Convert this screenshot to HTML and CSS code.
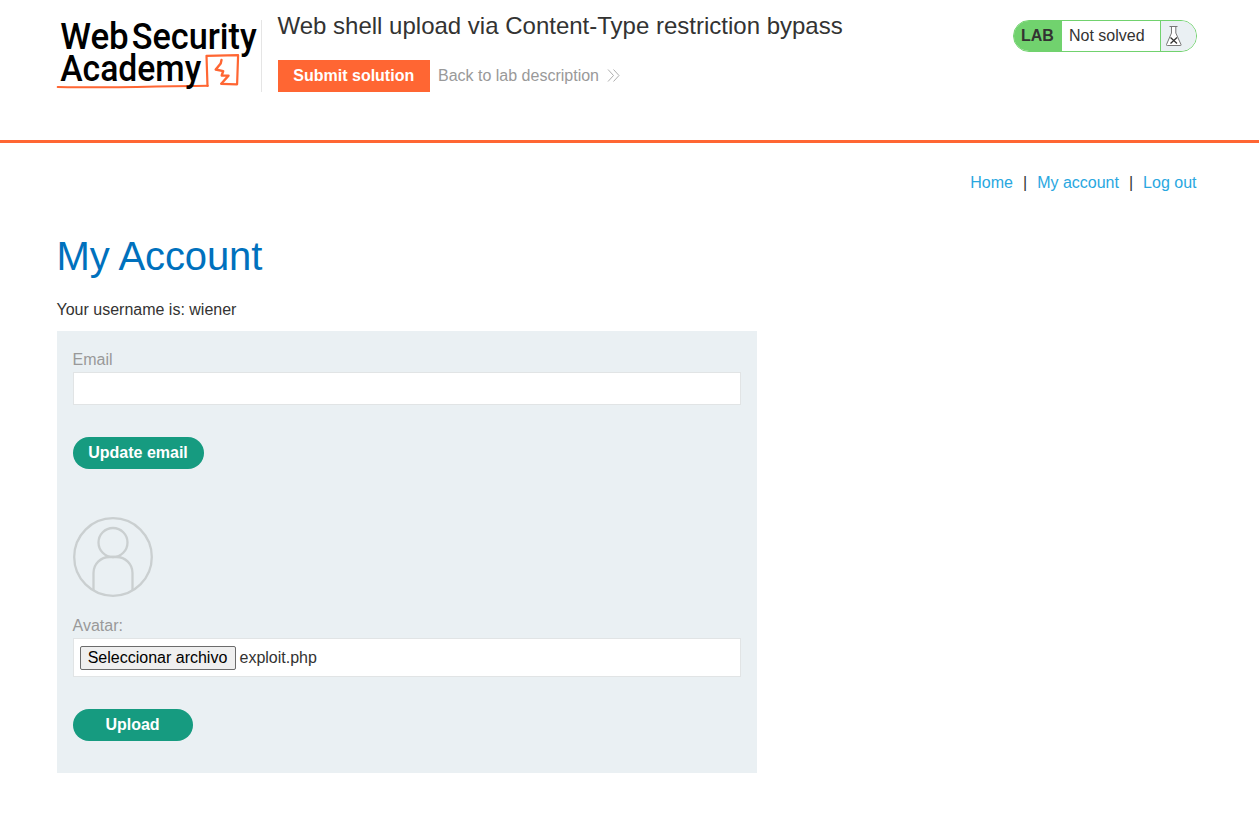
FILE: index.html
```html
<!DOCTYPE html>
<html lang="en">
<head>
<meta charset="utf-8">
<title>Web shell upload via Content-Type restriction bypass</title>
<link rel="stylesheet" href="styles.css">
</head>
<body>
<header class="lab-header">
  <svg class="logo" viewBox="57.300 20 204 72" role="img" aria-label="Web Security Academy">
    <g class="logo-mark">
      <path d="M58 87 C90 88 140 86.5 208 85.8" stroke-width="2"/>
      <path d="M207.8 86 L206.8 55.8 L238.4 55.2 L237.4 84.3 L221.5 83.9" stroke-width="2.2"/>
      <path d="M221.8 60 L221 63.4 L216 69.5 L223.5 71.2 L222 75.5 L228.8 75.6 L221.8 83.5" stroke-width="2.4"/>
    </g>
    <g class="logo-text">
      <text x="60.500" y="48.5" textLength="68.500" lengthAdjust="spacingAndGlyphs">Web</text>
      <text x="132" y="48.5" textLength="125" lengthAdjust="spacingAndGlyphs">Security</text>
      <text x="60.500" y="80.800" textLength="141" lengthAdjust="spacingAndGlyphs">Academy</text>
    </g>
  </svg>
  <div class="title-container">
    <h2 class="lab-title">Web shell upload via Content-Type restriction bypass</h2>
    <div class="lab-actions">
      <a class="submit-button">Submit solution</a>
      <a class="back-link">Back to lab description
        <svg class="chevrons" viewBox="0 0 13 13"><path d="M1 .5 L6.500 6.500 L1 12.500 M6.500 .5 L12 6.500 L6.500 12.500"/></svg>
      </a>
    </div>
  </div>
  <div class="lab-status">
    <span class="status-label">LAB</span>
    <span class="status-text">Not solved</span>
    <span class="status-icon">
      <svg class="flask" viewBox="0 0 18 22"><path class="glass" d="M4.500 1.500 H12.500 M6.500 1.500 V8 L1.500 19.500 Q1.200 20.500 2.300 20.500 H15.200 Q16.500 20.500 16 19.500 L10.800 8 V1.500"/><path class="cross" d="M5.500 12.500 L12 18.500 M12 12.500 L5.500 18.500"/></svg>
    </span>
  </div>
</header>
<main class="content">
  <nav class="top-links"><a>Home</a><span class="bar">|</span><a>My account</a><span class="bar">|</span><a>Log out</a></nav>
  <h1 class="page-title">My Account</h1>
  <p class="username">Your username is: wiener</p>
  <section class="account">
    <form>
      <label class="field-label" for="email">Email</label>
      <input class="text-input" id="email" type="email">
      <button class="button" type="button">Update email</button>
    </form>
    <form class="avatar-form">
      <svg class="avatar" viewBox="0 0 80 80"><circle cx="40" cy="40" r="38.800"/><circle cx="40" cy="25.500" r="14.500"/><path d="M20.500 73 V56 A16 16 0 0 1 36.500 40 H43.500 A16 16 0 0 1 59.500 56 V73"/></svg>
      <span class="field-label">Avatar:</span>
      <div class="file-input"><button class="file-button" type="button">Seleccionar archivo</button><span>exploit.php</span></div>
      <button class="button upload" type="button">Upload</button>
    </form>
  </section>
</main>
</body>
</html>
```
FILE: styles.css
```css
* { box-sizing: border-box; }
body {
  margin: 0;
  background: #fff;
  color: #333332;
  font: 16px/24px "Liberation Sans", Arial, sans-serif;
}
.lab-header {
  display: flex;
  align-items: flex-start;
  height: 143px;
  padding: 20px 62.500px 0 56.500px;
  border-bottom: 3px solid #ff6633;
}
.logo { width: 204px; height: 72px; flex: none; overflow: visible; }
.logo-text { font: 500 37px Roboto, sans-serif; fill: #000; }
.logo-mark { fill: none; stroke: #ff6633; stroke-linecap: round; stroke-linejoin: round; }
.title-container {
  display: flex;
  flex-direction: column;
  justify-content: space-between;
  height: 72px;
  padding-left: 16px;
  border-left: 1px solid #e5e5e5;
}
.lab-title { margin: -8px 0 0; font-size: 24px; font-weight: 400; line-height: 28px; }
.lab-actions { display: flex; align-items: center; gap: 8px; }
.submit-button {
  width: 152.500px;
  height: 32px;
  background: #ff6633;
  color: #fff;
  font-weight: 700;
  line-height: 32px;
  text-align: center;
}
.back-link { display: flex; align-items: center; gap: 8px; color: #999; line-height: 32px; }
.chevrons { width: 13px; height: 13px; margin-bottom: 2px; fill: none; stroke: #999; stroke-width: .8; }
.lab-status {
  display: flex;
  width: 184px;
  height: 32px;
  margin-left: auto;
  overflow: hidden;
  border: 1px solid #71d26e;
  border-radius: 16px;
  line-height: 30px;
}
.status-label { width: 48px; padding-left: 7.500px; background: #71d26e; font-weight: 700; }
.status-text { width: 99px; padding-left: 7.500px; border-right: 1px solid #71d26e; }
.status-icon { flex: 1; padding: 4px 0 0 4.500px; background: #eaf0f3; line-height: 0; }
.flask { width: 18px; height: 22px; }
.glass { fill: #fff; stroke: #777; stroke-width: 1; }
.cross { fill: none; stroke: #333332; stroke-width: 1.300; }
.content { padding: 28px 62.500px 0 56.500px; }
.top-links { display: flex; justify-content: flex-end; gap: 10px; color: #29a7df; }
.bar { color: #333332; }
.page-title { margin: 37px 0 0; color: #0071bd; font-size: 40px; font-weight: 400; line-height: 48px; letter-spacing: -.1px; }
.username { margin: 18px 0 9px; }
.account { width: 700px; height: 442px; padding: 16px; background: #eaf0f3; }
.field-label { display: block; height: 25px; color: #999; line-height: 26px; }
.text-input {
  display: block;
  width: 668px;
  height: 33px;
  border: 1px solid #e1e4e5;
  background: #fff;
}
.button {
  display: block;
  width: 131px;
  height: 32px;
  margin-top: 32px;
  padding: 0;
  border: 0;
  border-radius: 16px;
  background: #169b80;
  color: #fff;
  font: 700 16px/32px "Liberation Sans", Arial, sans-serif;
}
.avatar-form { margin-top: 48px; }
.avatar { display: block; width: 80px; height: 80px; margin-bottom: 16px; fill: none; stroke: #cacfd0; stroke-width: 2.300; }
.file-input {
  display: flex;
  align-items: center;
  gap: 4px;
  height: 39px;
  padding-left: 6px;
  border: 1px solid #e1e4e5;
  background: #fff;
}
.file-button {
  width: 156px;
  height: 24px;
  padding: 0;
  border: 1px solid #6b6b6b;
  border-radius: 2px;
  background: #efefef;
  color: #000;
  font: 16px/20px "Liberation Sans", Arial, sans-serif;
}
.upload { width: 120px; }
```
